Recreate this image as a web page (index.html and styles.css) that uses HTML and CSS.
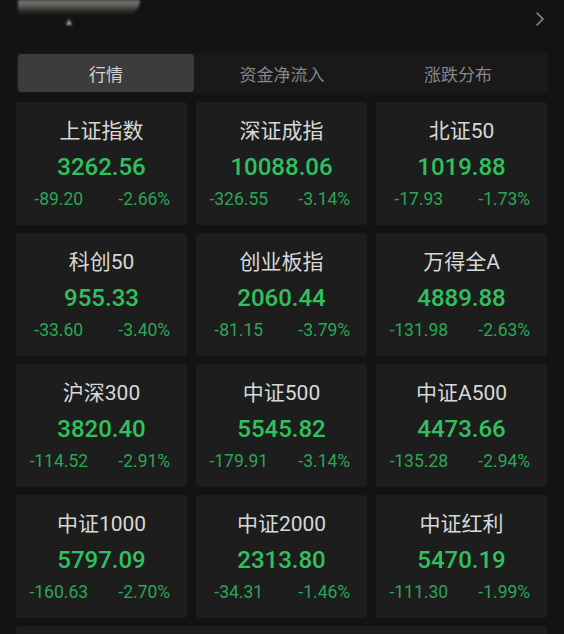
FILE: index.html
```html
<!DOCTYPE html>
<html lang="zh">
<head>
<meta charset="utf-8">
<title>行情</title>
<link rel="stylesheet" href="styles.css">
</head>
<body>
<div class="page">
  <div class="header">
    <div class="logo"><span class="logo-dot"></span></div>
    <svg class="chevron" width="10" height="16" viewBox="0 0 10 16"><path d="M2 2 L8 8 L2 14" fill="none" stroke="#8a8a8a" stroke-width="1.6" stroke-linecap="round" stroke-linejoin="round"/></svg>
  </div>
  <div class="tabs">
    <div class="tab active">行情</div>
    <div class="tab">资金净流入</div>
    <div class="tab">涨跌分布</div>
  </div>
  <div class="grid">
    <div class="card"><div class="name">上证指数</div><div class="price">3262.56</div><div class="chg"><span>-89.20</span><span>-2.66%</span></div></div>
    <div class="card"><div class="name">深证成指</div><div class="price">10088.06</div><div class="chg"><span>-326.55</span><span>-3.14%</span></div></div>
    <div class="card"><div class="name">北证50</div><div class="price">1019.88</div><div class="chg"><span>-17.93</span><span>-1.73%</span></div></div>
    <div class="card"><div class="name">科创50</div><div class="price">955.33</div><div class="chg"><span>-33.60</span><span>-3.40%</span></div></div>
    <div class="card"><div class="name">创业板指</div><div class="price">2060.44</div><div class="chg"><span>-81.15</span><span>-3.79%</span></div></div>
    <div class="card"><div class="name">万得全A</div><div class="price">4889.88</div><div class="chg"><span>-131.98</span><span>-2.63%</span></div></div>
    <div class="card"><div class="name">沪深300</div><div class="price">3820.40</div><div class="chg"><span>-114.52</span><span>-2.91%</span></div></div>
    <div class="card"><div class="name">中证500</div><div class="price">5545.82</div><div class="chg"><span>-179.91</span><span>-3.14%</span></div></div>
    <div class="card"><div class="name">中证A500</div><div class="price">4473.66</div><div class="chg"><span>-135.28</span><span>-2.94%</span></div></div>
    <div class="card"><div class="name">中证1000</div><div class="price">5797.09</div><div class="chg"><span>-160.63</span><span>-2.70%</span></div></div>
    <div class="card"><div class="name">中证2000</div><div class="price">2313.80</div><div class="chg"><span>-34.31</span><span>-1.46%</span></div></div>
    <div class="card"><div class="name">中证红利</div><div class="price">5470.19</div><div class="chg"><span>-111.30</span><span>-1.99%</span></div></div>
    <div class="card wide"></div>
  </div>
</div>
</body>
</html>
```

FILE: styles.css
```css
html, body {
  margin: 0;
  padding: 0;
  background: #131313;
  height: 100%;
  overflow: hidden;
}
.page {
  font-family: Roboto, "Noto Sans CJK SC", sans-serif;
  color: #d6d6d6;
}
.header {
  height: 53px;
  display: flex;
  align-items: flex-start;
  justify-content: space-between;
  padding: 0 19px 0 18px;
  box-sizing: border-box;
}
.logo {
  position: relative;
  width: 122px;
  height: 16px;
  background: linear-gradient(180deg, #8a8a86 0%, #6b6b68 35%, #2e2e2c 70%, #141414 100%);
  filter: blur(1px);
  border-radius: 0 0 30px 6px;
  opacity: 0.85;
}
.logo-dot {
  position: absolute;
  left: 48px;
  top: 19px;
  width: 0;
  height: 0;
  border-left: 3px solid transparent;
  border-right: 3px solid transparent;
  border-bottom: 6px solid #bdbdbd;
}
.chevron {
  margin-top: 11px;
}
.tabs {
  margin: 0 16px 0 16px;
  height: 40px;
  padding: 1px 2px;
  box-sizing: border-box;
  background: #191919;
  border-radius: 4px;
  display: grid;
  grid-template-columns: 1fr 1fr 1fr;
}
.tab {
  display: flex;
  align-items: center;
  justify-content: center;
  font-size: 17px;
  color: #868686;
  border-radius: 4px;
}
.tab.active {
  background: #3c3c3c;
  color: #d4d4d4;
}
.grid {
  margin: 9px 17px 0 16px;
  display: grid;
  grid-template-columns: 1fr 1fr 1fr;
  column-gap: 9px;
  row-gap: 8px;
}
.card {
  background: #1d1d1d;
  border-radius: 3px;
  height: 123px;
  box-sizing: border-box;
  padding-top: 15px;
  display: flex;
  flex-direction: column;
  align-items: stretch;
  text-align: center;
}
.card.wide {
  grid-column: 1 / 4;
}
.name {
  font-size: 21px;
  line-height: 28px;
  color: #d8d8d8;
}
.price {
  margin-top: 4px;
  font-size: 24px;
  line-height: 36px;
  font-weight: 500;
  color: #30c15e;
}
.chg {
  margin-top: 2px;
  display: grid;
  grid-template-columns: 1fr 1fr;
  font-size: 17.5px;
  line-height: 24px;
  font-weight: 400;
  color: #2ba653;
}
```
